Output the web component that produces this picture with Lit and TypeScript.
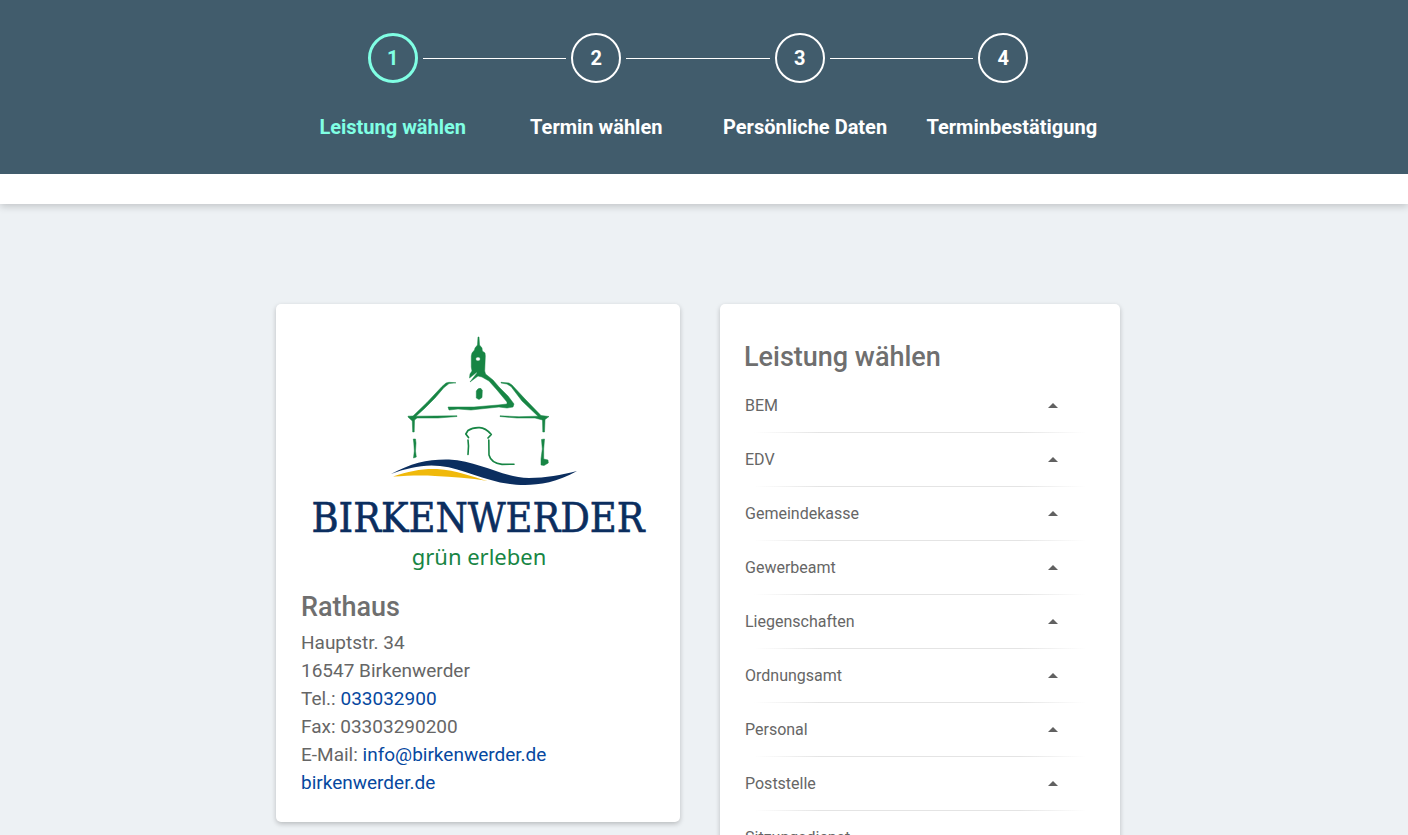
import { LitElement, html, css, svg } from "lit";
import { customElement, state } from "lit/decorators.js";
import { classMap } from "lit/directives/class-map.js";

@customElement("step-bar")
class StepBar extends LitElement {
  @state() private current = 0;
  private steps = ["Leistung wählen", "Termin wählen", "Persönliche Daten", "Terminbestätigung"];

  static styles = css`
    :host { display: block; background: #415c6c; padding: 33px 0; }
    .steps {
      box-sizing: border-box; list-style: none; margin: 0 auto; padding: 0 27px 0 15px;
      width: calc(60% + 12px); max-width: 856px;
      display: grid; grid-template-columns: repeat(4, minmax(0, 1fr));
    }
    .step { color: #fff; font-size: 20px; font-weight: 700; }
    .step.active { color: #80ffe4; }
    .track { display: grid; grid-template-columns: 1fr 50px 1fr; align-items: center; column-gap: 5px; }
    .line { height: 1px; background: #fff; }
    .step:first-child .line:first-child, .step:last-child .line:last-child { visibility: hidden; }
    .circle {
      box-sizing: border-box; width: 50px; height: 50px; border: 2px solid currentColor; border-radius: 50%;
      display: flex; align-items: center; justify-content: center;
    }
    .active .circle { border-width: 3px; }
    .label { margin-top: 30px; padding: 0 25px; line-height: 28px; text-align: center; white-space: nowrap; }
  `;

  render() {
    return html`<ol class="steps">
      ${this.steps.map((label, i) => html`
        <li class=${classMap({ step: true, active: i === this.current })}>
          <div class="track">
            <span class="line"></span><span class="circle">${i + 1}</span><span class="line"></span>
          </div>
          <div class="label">${label}</div>
        </li>`)}
    </ol>`;
  }
}

const emblem = svg`
  <g fill="#178544" stroke="#178544" stroke-width="0.5" stroke-linejoin="round">
    <path fill-rule="evenodd" d="M98 12 L99 12 L99.500 20 L102 23 L102.300 26 L105 28 L105.300 31 L104.700 46 L105.500 49 L113 55 L119 62 L128 71 L134 79 L133 82 L127 83 L119 82 L100 84 L91 85 L78 84 L69 85 L68 82 L79 82 L94 82 L118 80 L127 79 L127 77 L117 65 L109 56 L102 52 L98 51 L90 57 L97 48 L97 47 L89.500 53 L90 49 L92 46 L91.300 42 L91.300 31 L92 28 L94.500 25 L95 23 L97.500 20 Z M95.700 34 a2.300 2 0 1 0 4.600 0 a2.300 2 0 1 0 -4.600 0 Z"/>
    <path d="M96.300 66 Q98 62.500 101 63.500 L102.300 65.500 L102 72.500 L99 74.500 L96.300 73 Z"/>
    <path d="M76 57.800 L69 58.600 L64 62.500 L55 73 L44 84 L36 91.200 L56 91 L77 90.800 L77 91.500 L58 93 L37 93 L34.500 95 L34.200 107 L32.700 107 L32.300 96 L28 92 L28 91.200 L33 91 L47 77.500 L62 61.500 L66 58 L69 57.300 Z"/>
    <path d="M121 57.300 L129 58 L132 60 L145 74 L161 90.500 L169 91.500 L165 94.500 L164.500 107 L162.800 107 L162.500 95 L155 93 L137 93 L120 91.500 L120 90.800 L139 91.700 L158 91.200 L142 76 L131 61.500 L127 59 L121 58 Z"/>
    <path d="M33.300 114 L35.500 114 L36 118 L35.500 126 L36.300 132 L33.500 133 L34.300 126 L33.800 118 Z"/>
    <path d="M161.500 114.500 L164.500 114 L163.700 124 L163.700 134 L168 135 L168.300 138 L164 140.500 L161 140 L161 134 L162.300 124 Z"/>
  </g>
  <g fill="none" stroke="#178544" stroke-linecap="round" stroke-linejoin="round">
    <path stroke-width="1.700" d="M88.500 112.500 L85.800 109 L88 105.500 Q92.500 102.500 99 102.700 Q105 102.300 111.300 109.500 L108 113"/>
    <path stroke-width="1.600" d="M88 115 L88.500 121 L88 129.500 M108.800 115 L109 130 Q111 138 122 139.400 L134 139.200"/>
  </g>
  <path fill="#0b2e5f" d="M11 149 C31 138 49 134 69 134.500 C99 136 121 152 149 153 C166 153 181 150 197 146 C178 157 159 160 145 160 C109 160 88 144 60 141 C44 139 27 143 11 149 Z"/>
  <path fill="#f0b90b" d="M13 151.500 C29 146 42 143.500 57 144 C77 145 92 152 108 156 C90 153 73 152 55 151 C39 150 27 151 13 151.500 Z"/>`;

@customElement("office-card")
class OfficeCard extends LitElement {
  static styles = css`
    :host { display: block; color: #666; padding: 24px 25px 25px; }
    .logo { display: block; width: 100%; height: auto; }
    .name {
      font: 400 41px "DejaVu Serif Condensed", "DejaVu Serif", serif;
      fill: #0b2e5f; stroke: #0b2e5f; stroke-width: 0.6px;
    }
    .claim { font: 400 22px "Noto Sans", sans-serif; fill: #178544; }
    h2 { margin: 9px 0 4px; font-size: 27px; line-height: 36px; font-weight: 500; color: #6f6f6f; }
    address { font-style: normal; font-size: 19px; line-height: 28px; }
    a { color: #0648a0; text-decoration: none; }
  `;

  render() {
    return html`
      <svg class="logo" viewBox="0 0 354 252" role="img" aria-label="Birkenwerder – grün erleben">
        <g transform="translate(79 -3)">${emblem}</g>
        <text class="name" x="177" y="204" text-anchor="middle">BIRKENWERDER</text>
        <text class="claim" x="178" y="237" text-anchor="middle">grün erleben</text>
      </svg>
      <h2>Rathaus</h2>
      <address>
        Hauptstr. 34<br />
        16547 Birkenwerder<br />
        Tel.: <a href="tel:033032900">033032900</a><br />
        Fax: 03303290200<br />
        E-Mail: <a href="mailto:info@birkenwerder.de">info@birkenwerder.de</a><br />
        <a href="https://birkenwerder.de">birkenwerder.de</a>
      </address>`;
  }
}

@customElement("service-list")
class ServiceList extends LitElement {
  private services = [
    "BEM", "EDV", "Gemeindekasse", "Gewerbeamt", "Liegenschaften",
    "Ordnungsamt", "Personal", "Poststelle", "Sitzungsdienst",
  ];

  static styles = css`
    :host { display: block; color: #666; padding: 35px 24px 24px; }
    h2 { margin: 0 0 4px; font-size: 27px; line-height: 36px; font-weight: 500; color: #6f6f6f; }
    ul { list-style: none; margin: 0; padding: 0; }
    .row {
      box-sizing: border-box; width: 100%; height: 53px; padding: 0 38px 0 1px; border: 0; background: none;
      display: flex; align-items: center; justify-content: space-between;
      font: inherit; font-size: 16px; line-height: 21px; color: inherit; cursor: pointer;
    }
    .caret { width: 10px; height: 5px; fill: #616161; }
    .rule {
      height: 1px; margin: 0 10px;
      background: linear-gradient(90deg, transparent, #e4e4e4 20%, #e4e4e4 80%, transparent);
    }
  `;

  render() {
    return html`
      <h2>Leistung wählen</h2>
      <ul>
        ${this.services.map((name) => html`
          <li>
            <button class="row" type="button" aria-expanded="false">
              <span>${name}</span>
              <svg class="caret" viewBox="0 0 10 5" aria-hidden="true"><path d="M0 5 L5 0 L10 5 Z" /></svg>
            </button>
            <div class="rule"></div>
          </li>`)}
      </ul>`;
  }
}

@customElement("app-root")
class AppRoot extends LitElement {
  static styles = css`
    :host {
      display: flex; flex-direction: column; height: 100vh; overflow: hidden;
      background: #edf1f4; font-family: Roboto, sans-serif;
    }
    .head { flex: none; background: #fff; padding-bottom: 30px; box-shadow: 0 2px 8px rgba(0, 0, 0, 0.2); }
    .content {
      flex: 1; min-height: 0; width: 60%; max-width: 844px; margin: 0 auto; padding: 100px 12px 0 0;
      display: grid; grid-template-columns: minmax(0, 404fr) minmax(0, 400fr); column-gap: 40px; align-items: start;
    }
    .card { background: #fff; border-radius: 5px; box-shadow: 0 2px 5px rgba(0, 0, 0, 0.22); }
  `;

  render() {
    return html`
      <header class="head"><step-bar></step-bar></header>
      <main class="content">
        <office-card class="card"></office-card>
        <service-list class="card"></service-list>
      </main>`;
  }
}
